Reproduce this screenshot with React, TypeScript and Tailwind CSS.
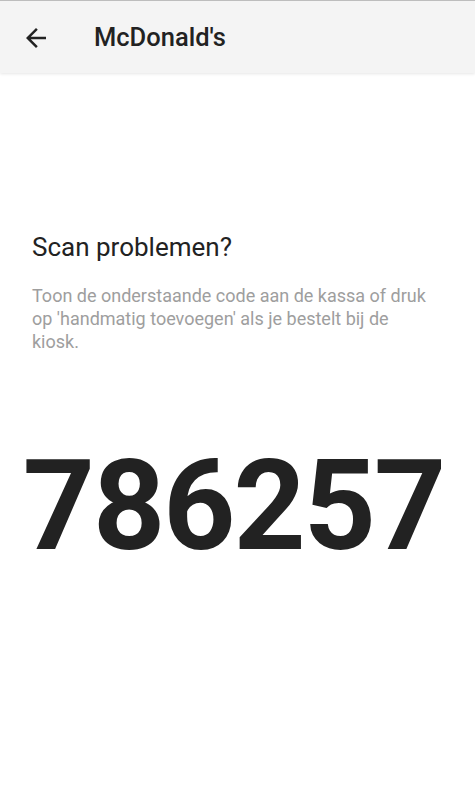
import React from "react";

function BackArrow() {
  return (
    <svg width="30" height="30" viewBox="0 0 24 24" aria-hidden="true">
      <path
        fill="#222222"
        d="M20 11H7.83l5.59-5.59L12 4l-8 8 8 8 1.41-1.41L7.83 13H20v-2z"
      />
    </svg>
  );
}

export default function App() {
  return (
    <div
      className="flex min-h-[808px] w-full flex-col bg-white"
      style={{ fontFamily: "Roboto, 'Noto Sans', sans-serif" }}
    >
      <header className="relative z-10 flex h-[73px] items-center border-t border-[#bdbdbd] bg-[#f4f4f4] shadow-[0_1px_3px_rgba(0,0,0,0.1)]">
        <button className="ml-[21px] mt-[2px] flex h-[30px] w-[30px] items-center justify-center">
          <BackArrow />
        </button>
        <h1 className="ml-[43px] mt-[2px] text-[25.5px] font-medium leading-none text-[#222]">
          McDonald's
        </h1>
      </header>

      <main className="flex flex-col pl-8 pt-[158px]">
        <h2 className="text-[26px] leading-[32px] text-[#222]">Scan problemen?</h2>
        <p className="mt-[21px] w-[404px] text-[18px] leading-[23px] text-[#9e9e9e]">
          Toon de onderstaande code aan de kassa of druk op 'handmatig toevoegen' als je
          bestelt bij de kiosk.
        </p>
        <div className="-ml-8 mt-[90px] pr-[8px] text-center text-[126px] font-bold leading-none tracking-[-2px] text-[#222]">
          786257
        </div>
      </main>
    </div>
  );
}
